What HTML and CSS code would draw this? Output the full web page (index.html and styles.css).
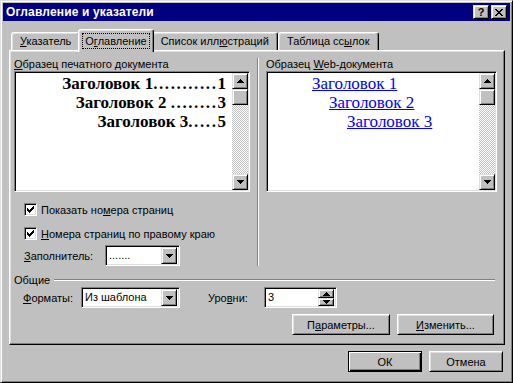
FILE: index.html
```html
<!DOCTYPE html>
<html lang="ru">
<head>
  <meta charset="UTF-8">
  <meta name="viewport" content="width=device-width, initial-scale=1.0">
  <link rel="stylesheet" href="styles.css">
</head>
<body>

  <div class="window">
    <div class="titlebar">
      <span class="title">Оглавление и указатели</span>
      <div class="title-buttons">
        <div class="tbtn help">?</div>
        <div class="tbtn close">
          <svg width="8" height="7" viewBox="0 0 8 7"><path d="M0 0h2v1H0zM6 0h2v1H6zM1 1h2v1H1zM5 1h2v1H5zM2 2h4v1H2zM3 3h2v1H3zM2 4h4v1H2zM1 5h2v1H1zM5 5h2v1H5zM0 6h2v1H0zM6 6h2v1H6z"/></svg>
        </div>
      </div>
    </div>

    <div class="dialog">
      <div class="tabs">
        <div class="tab"><u>У</u>казатель</div>
        <div class="tab active"><span class="focus">О<u>г</u>лавление</span></div>
        <div class="tab">Список илл<u>ю</u>страций</div>
        <div class="tab">Таблица сс<u>ы</u>лок</div>
      </div>

      <div class="panel">
        <div class="previews">
          <div class="col col-print">
            <div class="label"><u>О</u>бразец печатного документа</div>
            <div class="listbox">
              <div class="list-body print-sample">
                <p>Заголовок 1<span class="dots">...........</span>1</p>
                <p>Заголовок 2 <span class="dots">........</span>3</p>
                <p>Заголовок 3<span class="dots">.....</span>5</p>
              </div>
              <div class="vscroll">
                <div class="sbtn"><svg width="7" height="4" viewBox="0 0 7 4"><path d="M3 0h1v1H3zM2 1h3v1H2zM1 2h5v1H1zM0 3h7v1H0z"/></svg></div>
                <div class="sbtn thumb"></div>
                <div class="track"></div>
                <div class="sbtn"><svg width="7" height="4" viewBox="0 0 7 4"><path d="M0 0h7v1H0zM1 1h5v1H1zM2 2h3v1H2zM3 3h1v1H3z"/></svg></div>
              </div>
            </div>

            <div class="check first">
              <div class="checkbox"><svg width="7" height="7" viewBox="0 0 7 7"><path d="M6 0h1v1H6zM5 1h2v1H5zM0 2h1v1H0zM4 2h3v1H4zM0 3h2v1H0zM3 3h3v1H3zM0 4h5v1H0zM1 5h3v1H1zM2 6h1v1H2z"/></svg></div>
              <span>Показать но<u>м</u>ера страниц</span>
            </div>
            <div class="check">
              <div class="checkbox"><svg width="7" height="7" viewBox="0 0 7 7"><path d="M6 0h1v1H6zM5 1h2v1H5zM0 2h1v1H0zM4 2h3v1H4zM0 3h2v1H0zM3 3h3v1H3zM0 4h5v1H0zM1 5h3v1H1zM2 6h1v1H2z"/></svg></div>
              <span><u>Н</u>омера страниц по правому краю</span>
            </div>

            <div class="fill-row">
              <span class="fill-label"><u>З</u>аполнитель:</span>
              <div class="combo combo-fill">
                <span class="combo-text">.......</span>
                <div class="sbtn drop"><svg width="7" height="4" viewBox="0 0 7 4"><path d="M0 0h7v1H0zM1 1h5v1H1zM2 2h3v1H2zM3 3h1v1H3z"/></svg></div>
              </div>
            </div>
          </div>

          <div class="vsep"></div>

          <div class="col col-web">
            <div class="label">Образец <u>W</u>eb-документа</div>
            <div class="listbox">
              <div class="list-body web-sample">
                <p class="lvl1"><a>Заголовок 1</a></p>
                <p class="lvl2"><a>Заголовок 2</a></p>
                <p class="lvl3"><a>Заголовок 3</a></p>
              </div>
              <div class="vscroll">
                <div class="sbtn"><svg width="7" height="4" viewBox="0 0 7 4"><path d="M3 0h1v1H3zM2 1h3v1H2zM1 2h5v1H1zM0 3h7v1H0z"/></svg></div>
                <div class="sbtn thumb"></div>
                <div class="track"></div>
                <div class="sbtn"><svg width="7" height="4" viewBox="0 0 7 4"><path d="M0 0h7v1H0zM1 1h5v1H1zM2 2h3v1H2zM3 3h1v1H3z"/></svg></div>
              </div>
            </div>
          </div>
        </div>

        <div class="group">
          <div class="group-title">
            <span>Общие</span>
            <div class="hline"></div>
          </div>
          <div class="group-row">
            <span class="formats-label"><u>Ф</u>орматы:</span>
            <div class="combo combo-formats">
              <span class="combo-text">Из шаблона</span>
              <div class="sbtn drop"><svg width="7" height="4" viewBox="0 0 7 4"><path d="M0 0h7v1H0zM1 1h5v1H1zM2 2h3v1H2zM3 3h1v1H3z"/></svg></div>
            </div>
            <span class="levels-label">Уро<u>в</u>ни:</span>
            <div class="combo spin">
              <span class="combo-text">3</span>
              <div class="spin-buttons">
                <div class="sbtn spin-btn"><svg width="7" height="4" viewBox="0 0 7 4"><path d="M3 0h1v1H3zM2 1h3v1H2zM1 2h5v1H1zM0 3h7v1H0z"/></svg></div>
                <div class="sbtn spin-btn"><svg width="7" height="4" viewBox="0 0 7 4"><path d="M0 0h7v1H0zM1 1h5v1H1zM2 2h3v1H2zM3 3h1v1H3z"/></svg></div>
              </div>
            </div>
          </div>
          <div class="group-buttons">
            <div class="btn btn-params">П<u>а</u>раметры...</div>
            <div class="btn btn-change"><u>И</u>зменить...</div>
          </div>
        </div>
      </div>

      <div class="footer">
        <div class="btn btn-default">ОК</div>
        <div class="btn">Отмена</div>
      </div>
    </div>
  </div>

</body>
</html>
```

FILE: styles.css
```css
* {
  margin: 0;
  padding: 0;
  box-sizing: border-box;
}

body {
  margin: 0;
  background-color: #c0c0c0;
  font-family: "Liberation Sans", Arial, sans-serif;
  font-size: 11px;
  color: #000;
}

u {
  text-decoration: underline;
  text-underline-offset: 1px;
}

/* window frame */
.window {
  width: 513px;
  height: 383px;
  background-color: #c0c0c0;
  border: 1px solid;
  border-color: #dfdfdf #000 #000 #dfdfdf;
  box-shadow: inset 1px 1px #fff, inset -1px -1px #808080;
  padding: 2px;
  display: flex;
  flex-direction: column;
}

.titlebar {
  height: 18px;
  background-color: #000080;
  color: #fff;
  display: flex;
  align-items: center;
  justify-content: space-between;
  padding: 0 3px 0 3px;
}

.title {
  font-weight: bold;
  font-size: 12px;
  letter-spacing: 0.15px;
}

.title-buttons {
  display: flex;
  gap: 2px;
}

.tbtn {
  width: 16px;
  height: 14px;
  background-color: #c0c0c0;
  color: #000;
  border: 1px solid;
  border-color: #dfdfdf #000 #000 #dfdfdf;
  box-shadow: inset 1px 1px #fff, inset -1px -1px #808080;
  display: flex;
  align-items: center;
  justify-content: center;
  font-weight: bold;
  font-size: 11px;
  line-height: 12px;
}

.close svg {
  display: block;
}

/* dialog body */
.dialog {
  flex: 1;
  padding: 8px 5px 0 6px;
  display: flex;
  flex-direction: column;
}

.tabs {
  display: flex;
  align-items: flex-end;
  height: 21px;
  padding-left: 2px;
}

.tab {
  height: 18px;
  padding: 0 8px;
  border: 1px solid;
  border-bottom: none;
  border-color: #fff #000 transparent #fff;
  border-radius: 3px 3px 0 0;
  box-shadow: inset -1px 0 #808080, inset 1px 1px #dfdfdf;
  line-height: 16px;
  white-space: nowrap;
}

.tab.active {
  height: 23px;
  margin: 0 -2px -2px;
  padding: 3px 3px 0;
  background-color: #c0c0c0;
  position: relative;
  z-index: 1;
}

.focus {
  display: block;
  border: 1px dotted #000;
  padding: 0 2px;
  line-height: 14px;
}

.panel {
  height: 295px;
  border: 1px solid;
  border-color: #fff #000 #000 #fff;
  box-shadow: inset -1px -1px #808080, inset 1px 1px #dfdfdf;
  padding: 7px 7px 0 4px;
}

.previews {
  display: flex;
}

.col-print {
  width: 236px;
}

.col-web {
  width: 231px;
}

.vsep {
  width: 2px;
  margin: 0 7px;
  border-left: 1px solid #808080;
  border-right: 1px solid #fff;
}

.label {
  height: 13px;
  line-height: 13px;
  white-space: nowrap;
}

/* sunken list with scrollbar */
.listbox {
  height: 121px;
  display: flex;
  border: 1px solid;
  border-color: #808080 #fff #fff #808080;
  box-shadow: inset 1px 1px #000, inset -1px -1px #dfdfdf;
  padding: 1px;
}

.list-body {
  flex: 1;
  background-color: #fff;
  font-family: "Liberation Serif", "Times New Roman", serif;
  font-size: 17px;
  padding-top: 1px;
}

.list-body p {
  height: 19px;
  line-height: 19px;
  white-space: nowrap;
}

.print-sample {
  text-align: right;
  font-weight: bold;
  padding-right: 6px;
}

.print-sample .dots {
  letter-spacing: 1.6px;
}

.web-sample a {
  color: #0000ff;
  text-decoration: underline;
}

.web-sample .lvl1 {
  padding-left: 44px;
}

.web-sample .lvl2 {
  padding-left: 61px;
}

.web-sample .lvl3 {
  padding-left: 79px;
}

.vscroll {
  width: 16px;
  display: flex;
  flex-direction: column;
}

.sbtn {
  width: 16px;
  height: 16px;
  flex: none;
  background-color: #c0c0c0;
  border: 1px solid;
  border-color: #dfdfdf #000 #000 #dfdfdf;
  box-shadow: inset 1px 1px #fff, inset -1px -1px #808080;
  display: flex;
  align-items: center;
  justify-content: center;
}

.sbtn svg {
  display: block;
}

.track {
  flex: 1;
  background-image: repeating-conic-gradient(#c0c0c0 0 25%, #fff 0 50%);
  background-size: 2px 2px;
}

/* checkboxes */
.check {
  display: flex;
  align-items: center;
  height: 13px;
  margin-top: 11px;
  margin-left: 10px;
  gap: 4px;
  white-space: nowrap;
}

.checkbox {
  width: 13px;
  height: 13px;
  background-color: #fff;
  border: 1px solid;
  border-color: #808080 #fff #fff #808080;
  box-shadow: inset 1px 1px #000, inset -1px -1px #dfdfdf;
  display: flex;
  align-items: center;
  justify-content: center;
}

.fill-row {
  display: flex;
  align-items: center;
  margin-top: 5px;
  margin-left: 10px;
}

.fill-label {
  width: 81px;
}

/* combo boxes */
.combo {
  height: 21px;
  display: flex;
  align-items: stretch;
  background-color: #fff;
  border: 1px solid;
  border-color: #808080 #fff #fff #808080;
  box-shadow: inset 1px 1px #000, inset -1px -1px #dfdfdf;
  padding: 2px;
}

.combo-text {
  flex: 1;
  line-height: 15px;
  padding-left: 1px;
}

.combo .drop {
  height: 17px;
  margin: -1px 0;
}

.combo-fill {
  width: 75px;
}

.combo-formats {
  width: 99px;
}

.spin {
  width: 73px;
}

.spin-buttons {
  display: flex;
  flex-direction: column;
  margin: -1px 0;
}

.sbtn.spin-btn {
  height: 9px;
}

.sbtn.spin-btn + .spin-btn {
  height: 8px;
}

/* group "Общие" */
.group {
  margin-right: 2px;
}

.group-title {
  display: flex;
  align-items: center;
  height: 13px;
  margin-top: 7px;
}

.hline {
  flex: 1;
  height: 2px;
  margin-left: 4px;
  border-top: 1px solid #808080;
  border-bottom: 1px solid #fff;
}

.group-row {
  display: flex;
  align-items: center;
  margin-top: 1px;
  padding-left: 9px;
}

.formats-label {
  width: 58px;
}

.levels-label {
  width: 56px;
  margin-left: 28px;
}

.group-buttons {
  display: flex;
  justify-content: flex-end;
  gap: 7px;
  margin-top: 6px;
  padding-right: 1px;
}

/* push buttons */
.btn {
  width: 74px;
  height: 21px;
  background-color: #c0c0c0;
  border: 1px solid;
  border-color: #fff #000 #000 #fff;
  box-shadow: inset 1px 1px #dfdfdf, inset -1px -1px #808080;
  display: flex;
  align-items: center;
  justify-content: center;
  white-space: nowrap;
}

.btn-params {
  width: 98px;
}

.btn-change {
  width: 97px;
}

.btn-default {
  border-color: #000;
  box-shadow: inset 1px 1px #fff, inset -1px -1px #000, inset -2px -2px #808080;
}

.footer {
  display: flex;
  justify-content: flex-end;
  gap: 7px;
  margin-top: 6px;
  padding-right: 2px;
}
```
